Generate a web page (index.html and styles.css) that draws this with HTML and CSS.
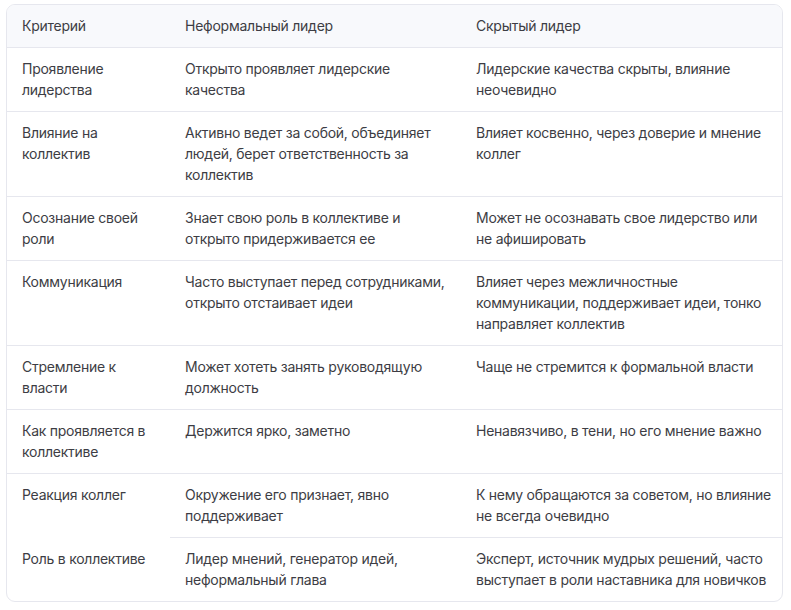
FILE: index.html
```html
<!DOCTYPE html>
<html lang="ru">
<head>
<meta charset="utf-8">
<title>Таблица</title>
<link rel="stylesheet" href="styles.css">
</head>
<body>
<div class="wrap">
  <div class="card">
    <table class="tbl">
      <colgroup>
        <col class="c1"><col class="c2"><col class="c3">
      </colgroup>
      <thead>
        <tr><th>Критерий</th><th>Неформальный лидер</th><th>Скрытый лидер</th></tr>
      </thead>
      <tbody>
        <tr><td>Проявление лидерства</td><td>Открыто проявляет лидерские качества</td><td>Лидерские качества скрыты, влияние неочевидно</td></tr>
        <tr><td>Влияние на коллектив</td><td>Активно ведет за собой, объединяет людей, берет ответственность за коллектив</td><td>Влияет косвенно, через доверие и мнение коллег</td></tr>
        <tr><td>Осознание своей роли</td><td>Знает свою роль в коллективе и открыто придерживается ее</td><td>Может не осознавать свое лидерство или не афишировать</td></tr>
        <tr><td>Коммуникация</td><td>Часто выступает перед сотрудниками, открыто отстаивает идеи</td><td>Влияет через межличностные коммуникации, поддерживает идеи, тонко направляет коллектив</td></tr>
        <tr><td>Стремление к власти</td><td>Может хотеть занять руководящую должность</td><td>Чаще не стремится к формальной власти</td></tr>
        <tr><td>Как проявляется в коллективе</td><td>Держится ярко, заметно</td><td>Ненавязчиво, в тени, но его мнение важно</td></tr>
        <tr><td>Реакция коллег</td><td>Окружение его признает, явно поддерживает</td><td>К нему обращаются за советом, но влияние не всегда очевидно</td></tr>
        <tr class="last"><td class="noline">Роль в коллективе</td><td>Лидер мнений, генератор идей, неформальный глава</td><td>Эксперт, источник мудрых решений, часто выступает в роли наставника для новичков</td></tr>
      </tbody>
    </table>
  </div>
</div>
</body>
</html>
```
FILE: styles.css
```css
html, body {
  margin: 0;
  padding: 0;
  background: #ffffff;
}
.wrap {
  padding: 4px 8px 0 6px;
}
.card {
  width: 775px;
  border: 1px solid #e6e7ee;
  border-radius: 9px;
  overflow: hidden;
}
.tbl {
  width: 775px;
  border-collapse: separate;
  border-spacing: 0;
  table-layout: fixed;
  font-family: Inter, "Noto Sans", sans-serif;
  font-size: 14px;
  letter-spacing: -0.25px;
  line-height: 21px;
  color: #3d3d44;
}
.c1 { width: 163px; }
.c2 { width: 291px; }
.c3 { width: 321px; }
.tbl th {
  background: #f8f9fc;
  font-weight: 400;
  text-align: left;
  padding: 10px 8px 11px 15px;
  vertical-align: top;
}
.tbl td {
  border-top: 1px solid #e6e7ee;
  padding: 10px 8px 11px 15px;
  vertical-align: top;
}
.tbl td.noline {
  border-top-color: transparent;
}
```
